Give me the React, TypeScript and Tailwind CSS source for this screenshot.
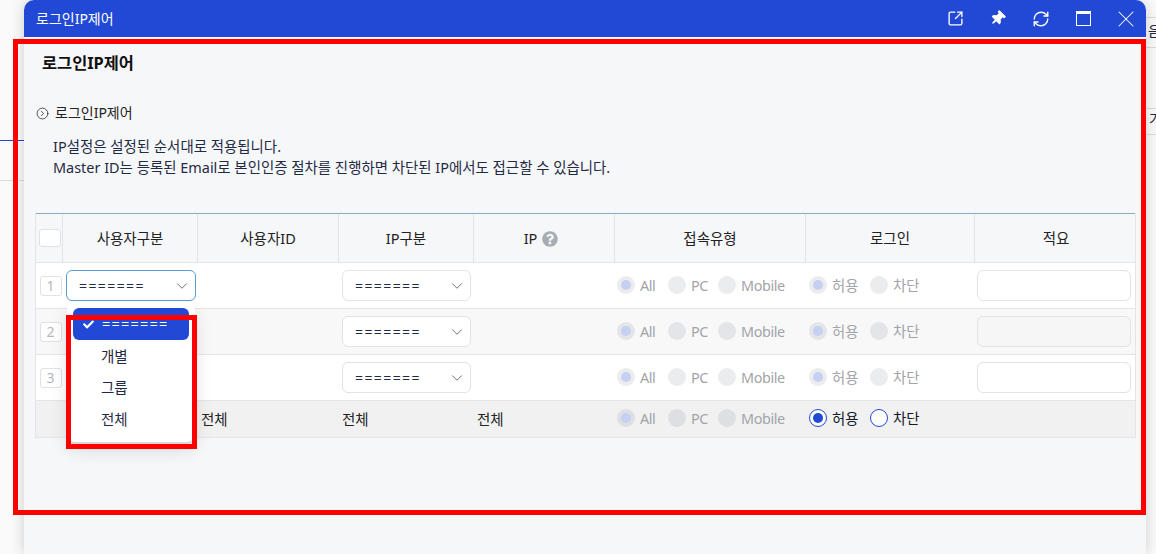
import { ChevronDown, CircleChevronRight, RefreshCw, SquareArrowOutUpRight, X } from 'lucide-react';
import { FaCheck, FaQuestionCircle, FaThumbtack } from 'react-icons/fa';

const gridCols = 'grid grid-cols-[27px_135px_141px_135px_141px_191px_169px_162px]';

function Radio({ label, checked, disabled, className }: { label: string; checked?: boolean; disabled?: boolean; className: string }) {
  return (
    <div className={`flex items-center ${className}`}>
      {disabled ? (
        <span className="flex h-[18px] w-[18px] shrink-0 items-center justify-center rounded-full bg-[#1f2a44]/[0.09]">
          {checked ? <span className="h-[10px] w-[10px] rounded-full bg-[#c5d0f2]" /> : null}
        </span>
      ) : (
        <span className="flex h-[18px] w-[18px] shrink-0 items-center justify-center rounded-full border border-[#2249d6] bg-white">
          {checked ? <span className="h-[10px] w-[10px] rounded-full bg-[#2249d6]" /> : null}
        </span>
      )}
      <span className={`ml-[5px] whitespace-nowrap text-[14.4px] ${disabled ? 'text-[#a2a4a8]' : 'text-[#111827]'}`}>{label}</span>
    </div>
  );
}

function Select({ focus }: { focus?: boolean }) {
  return (
    <div
      className={`flex h-[31px] items-center justify-between rounded-md border bg-white pl-3 pr-[4px] text-sm tracking-[1.4px] text-[#1f2a44] ${
        focus ? 'w-[130px] border-[#5b9bd5]' : 'w-[129px] border-[#e1e3e7]'
      }`}
    >
      <span>=======</span>
      <ChevronDown size={18} strokeWidth={1.1} className="text-[#47536b]" />
    </div>
  );
}

function AccessRadios() {
  return (
    <div className="flex h-full items-center pl-[2px] [&_span]:tracking-[-0.4px]">
      <Radio disabled checked label="All" className="w-[51px]" />
      <Radio disabled label="PC" className="w-[50px]" />
      <Radio disabled label="Mobile" className="w-[70px]" />
    </div>
  );
}

function LoginRadios({ active }: { active?: boolean }) {
  return (
    <div className="flex h-full items-center pl-[3px]">
      <Radio disabled={!active} checked label="허용" className="w-[61px]" />
      <Radio disabled={!active} label="차단" className="w-[70px]" />
    </div>
  );
}

function Row({ index, striped }: { index: number; striped?: boolean }) {
  return (
    <div className={`${gridCols} h-[46px] border-b border-[#e3e5e8] ${striped ? 'bg-[#f8f8f9]' : 'bg-white'}`}>
      <div className="flex items-center justify-center pl-[2px]">
        <span className="flex h-[20px] w-[22px] items-center justify-center rounded-[3px] border border-[#dfe1e5] bg-white text-sm text-[#b3b8c0]">
          {index}
        </span>
      </div>
      <div className="flex items-center pl-[3px]">{index === 1 ? <Select focus /> : null}</div>
      <div />
      <div className="flex items-center pl-[3px]">
        <Select />
      </div>
      <div />
      <AccessRadios />
      <LoginRadios />
      <div className="flex items-center pl-[2px]">
        <div className={`h-[31px] w-[154px] rounded-md border border-[#e1e3e7] ${striped ? 'bg-[#f6f6f7]' : 'bg-white'}`} />
      </div>
    </div>
  );
}

const headers = ['사용자구분', '사용자ID', 'IP구분', 'IP', '접속유형', '로그인', '적요'];

export default function App() {
  return (
    <div className="relative h-[554px] w-[1156px] overflow-hidden bg-[#fafafa] font-['Noto_Sans','Noto_Sans_CJK_KR',sans-serif]">
      {/* page behind the popup */}
      <div className="absolute left-0 top-[140px] h-px w-[24px] bg-[#2249d6]" />
      <div className="absolute left-0 top-[180px] h-px w-[24px] bg-[#dcdcdc]" />
      <div className="absolute left-[1146px] top-[17px] h-px w-[10px] bg-[#dcdcdc]" />
      <div className="absolute left-[1146px] top-[47px] h-px w-[10px] bg-[#dcdcdc]" />
      <div className="absolute left-[1146px] top-[108px] h-px w-[10px] bg-[#dcdcdc]" />
      <div className="absolute left-[1146px] top-[134px] h-px w-[10px] bg-[#dcdcdc]" />
      <div className="absolute left-[1148px] top-[21px] text-sm text-[#1f2a44]">음</div>
      <div className="absolute left-[1149px] top-[109px] text-sm text-[#1f2a44]">가</div>

      <div className="relative ml-[24px] flex h-[554px] w-[1122px] flex-col rounded-t-[10px] bg-[#f6f7f9] shadow-[0_0_14px_rgba(0,0,0,0.18)]">
        <div className="flex h-[37px] items-center justify-between rounded-t-[10px] bg-[#2249d6] pl-3 pr-[6px] text-white">
          <span className="text-sm">로그인IP제어</span>
          <div className="flex items-center">
            <SquareArrowOutUpRight size={17} strokeWidth={1.9} />
            <FaThumbtack size={15} className="ml-[26px] rotate-45" />
            <RefreshCw size={18} strokeWidth={1.8} className="ml-[27px]" />
            <div className="ml-[26px] h-[15px] w-[15px] border border-t-[3px] border-white" />
            <X size={28} strokeWidth={0.9} className="ml-[21px]" />
          </div>
        </div>

        <div className="flex flex-1 flex-col px-3 pt-[15px]">
          <h1 className="pl-[6px] text-[16.4px] font-bold leading-[22px] text-[#111111]">로그인IP제어</h1>
          <div className="mt-[29px] flex items-center text-sm leading-5 text-[#222222]">
            <CircleChevronRight size={13} strokeWidth={1.4} className="mr-[6px]" />
            로그인IP제어
          </div>
          <div className="mt-[13px] pl-[17px] text-[14.45px] leading-[21px] text-[#1f2a44]">
            <p>IP설정은 설정된 순서대로 적용됩니다.</p>
            <p>Master ID는 등록된 Email로 본인인증 절차를 진행하면 차단된 IP에서도 접근할 수 있습니다.</p>
          </div>

          <div className="-ml-px mt-[35px] w-[1101px] border-x border-[#e3e5e8]">
            <div className={`${gridCols} h-[50px] border-y border-b-[#e3e5e8] border-t-[#8fabc4] bg-[#f6f7f9]`}>
              <div className="flex items-center justify-center border-r border-[#e1e4e8] pl-[2px]">
                <span className="h-[18px] w-[22px] rounded-[3px] border border-[#dfe1e5] bg-white" />
              </div>
              {headers.map((title, i) => (
                <div
                  key={title}
                  className={`flex items-center justify-center pt-[2px] text-[14.5px] text-[#222222] ${i < headers.length - 1 ? 'border-r border-[#e1e4e8]' : ''} ${title === 'IP' ? 'pr-[6px]' : ''}`}
                >
                  {title}
                  {title === 'IP' ? <FaQuestionCircle size={16} className="ml-[5px] text-[#a6adb5]" /> : null}
                </div>
              ))}
            </div>
            <Row index={1} />
            <Row index={2} striped />
            <Row index={3} />
            <div className={`${gridCols} h-[37px] border-b border-[#e3e5e8] bg-[#f1f1f2] text-[14.5px] text-[#222222]`}>
              <div />
              <div />
              <div className="flex items-center pl-[3px] pt-[2px]">전체</div>
              <div className="flex items-center pl-[3px] pt-[2px]">전체</div>
              <div className="flex items-center pl-[3px] pt-[2px]">전체</div>
              <div className="pb-[1px]">
                <AccessRadios />
              </div>
              <div className="pb-[1px]">
                <LoginRadios active />
              </div>
              <div />
            </div>
          </div>
        </div>
      </div>

      {/* open select menu */}
      <div className="absolute left-[67px] top-[302px] h-[140px] w-[128px] rounded-lg bg-white px-[6px] pt-[6px] text-[14.5px] text-[#1f2a44] shadow-[0_2px_0_#d8d8d8,0_8px_18px_rgba(0,0,0,0.12)]">
        <div className="flex h-[32px] items-center rounded-md bg-[#2249d6] pl-[10px] tracking-[1.2px] text-white">
          <FaCheck size={11} className="mr-[8px]" />
          =======
        </div>
        <div className="flex h-[32px] items-center pl-[28px] pt-[2px]">개별</div>
        <div className="flex h-[31px] items-center pl-[28px]">그룹</div>
        <div className="flex h-[32px] items-center pl-[28px] pt-[2px]">전체</div>
      </div>

      {/* red annotation frames */}
      <div className="absolute left-[13px] top-[39px] h-[476px] w-[1133px] border-[5px] border-[#ff0000]" />
      <div className="absolute left-[66px] top-[315px] h-[134px] w-[131px] border-[5px] border-[#ff0000]" />
    </div>
  );
}
